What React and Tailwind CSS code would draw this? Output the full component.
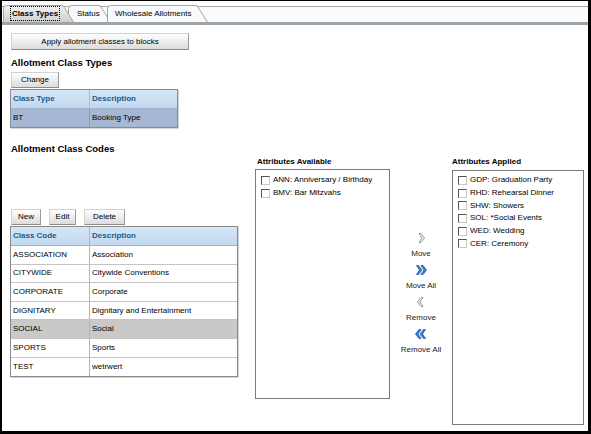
import React from "react";

const CLASS_CODES = [
  { code: "ASSOCIATION", desc: "Association" },
  { code: "CITYWIDE", desc: "Citywide Conventions" },
  { code: "CORPORATE", desc: "Corporate" },
  { code: "DIGNITARY", desc: "Dignitary and Entertainment" },
  { code: "SOCIAL", desc: "Social", selected: true },
  { code: "SPORTS", desc: "Sports" },
  { code: "TEST", desc: "wetrwert" },
];

const AVAILABLE = ["ANN: Anniversary / Birthday", "BMV: Bar Mitzvahs"];

const APPLIED = [
  "GDP: Graduation Party",
  "RHD: Rehearsal Dinner",
  "SHW: Showers",
  "SOL: *Social Events",
  "WED: Wedding",
  "CER: Ceremony",
];

const Tab = ({ w, active, className, children }) => (
  <div className={`relative h-[17px] flex items-center ${className}`}>
    <svg className="absolute inset-0" width={w} height="17">
      <defs>
        <linearGradient id="tabOn" x1="0" y1="0" x2="0" y2="1">
          <stop offset="0" stopColor="#f2f2f2" />
          <stop offset="1" stopColor="#cfcfcf" />
        </linearGradient>
      </defs>
      <path
        d={`M0.5,17 L0.5,3.5 Q0.5,0.5 3.5,0.5 L${w - 11},0.5 L${w - 0.5},17`}
        fill={active ? "url(#tabOn)" : "#f7f9fa"}
        stroke="#a4a4a4"
      />
    </svg>
    <div className="relative">{children}</div>
  </div>
);

const Btn = ({ className, children }) => (
  <div
    className={`h-[16px] flex items-center justify-center border border-[#d2d2d2] border-r-[#9a9a9a] border-b-[#8c8c8c] bg-gradient-to-b from-white to-[#dcdcdc] text-black ${className}`}
  >
    {children}
  </div>
);

const Check = ({ label }) => (
  <div className="h-[12.7px] flex items-center gap-[3px]">
    <span className="w-[9px] h-[9px] border border-[#555] border-r-[#c8c8c8] border-b-[#c8c8c8] bg-white" />
    <span>{label}</span>
  </div>
);

const Chevron = ({ left }) => (
  <svg width="8" height="10" viewBox="0 0 8 10">
    <path
      d={left ? "M6,0.5 L4,0.5 L0.5,5 L4,9.5 L6,9.5 L3,5 Z" : "M2,0.5 L4,0.5 L7.5,5 L4,9.5 L2,9.5 L5,5 Z"}
      fill="#f4f4f4"
      stroke="#8e8e8e"
      strokeWidth="0.9"
    />
  </svg>
);

const DoubleChevron = ({ left }) => (
  <svg width="12" height="10" viewBox="0 0 12 10">
    {(left
      ? ["M6,0.5 L4,0.5 L0.5,5 L4,9.5 L6,9.5 L3,5 Z", "M10.5,0.5 L8.5,0.5 L5,5 L8.5,9.5 L10.5,9.5 L7.5,5 Z"]
      : ["M1.5,0.5 L3.5,0.5 L7,5 L3.5,9.5 L1.5,9.5 L4.5,5 Z", "M6,0.5 L8,0.5 L11.5,5 L8,9.5 L6,9.5 L9,5 Z"]
    ).map((d) => (
      <path key={d} d={d} fill="#3b82d6" stroke="#1d57a8" strokeWidth="0.8" />
    ))}
  </svg>
);

const HeadCell = ({ className, children }) => (
  <div className={`h-full flex items-center pl-[2px] font-bold text-[#22598f] ${className}`}>{children}</div>
);

const App = () => {
  return (
    <div className="w-[591px] h-[434px] bg-white border-t border-l-2 border-r-[3px] border-b-[3px] border-black overflow-hidden font-['Liberation_Sans',Arial,sans-serif] text-[8px] text-black leading-none">
      {/* Tabs */}
      <div className="mt-[5px] h-[19px] border-t border-[#a8a8a8] bg-[#fafcfd] flex items-end pl-[1px] border-b-[3px] border-b-[#9ea3a8]">
        <Tab w={71} active className="w-[71px] z-10 pl-[7px]">
          <span className="font-bold border border-dotted border-black px-[1px] py-[2px]">Class Types</span>
        </Tab>
        <Tab w={43} className="w-[43px] -ml-[6px] pl-[9px]">
          Status
        </Tab>
        <Tab w={101} className="w-[101px] -ml-[4px] pl-[8px]">
          Wholesale Allotments
        </Tab>
      </div>

      <div className="pl-[9px]">
        <Btn className="mt-[8px] w-[178px] h-[17px]">Apply allotment classes to blocks</Btn>

        <div className="mt-[7px] h-[11px] leading-[11px] text-[9.5px] font-bold">Allotment Class Types</div>
        <Btn className="mt-[4px] w-[48px]">Change</Btn>

        {/* Class types table */}
        <div className="mt-[1px] -ml-[1px] w-[168px] border border-[#8a8a8a] shadow-[1px_1px_0_#d6d6d6]">
          <div className="h-[19px] flex bg-gradient-to-b from-[#d6e6f6] to-[#c2d8ef] border-b border-[#9fb4ca]">
            <HeadCell className="w-[79px] border-r border-[#a9bccf]">Class Type</HeadCell>
            <HeadCell>Description</HeadCell>
          </div>
          <div className="h-[18px] flex bg-[#a5b7d5]">
            <div className="w-[79px] pl-[2px] flex items-center border-r border-[#8d9cb6]">BT</div>
            <div className="pl-[2px] flex items-center">Booking Type</div>
          </div>
        </div>

        <div className="mt-[15px] flex">
          {/* Class codes */}
          <div className="w-[227px]">
            <div className="h-[12px] leading-[12px] text-[9.5px] font-bold">Allotment Class Codes</div>
            <div className="mt-[54px] flex gap-[8px]">
              <Btn className="w-[30px]">New</Btn>
              <Btn className="w-[27px]">Edit</Btn>
              <Btn className="w-[41px]">Delete</Btn>
            </div>
            <div className="mt-[1px] -ml-[1px] w-[228px] border border-[#8a8a8a] shadow-[1px_1px_0_#d6d6d6]">
              <div className="h-[19px] flex bg-gradient-to-b from-[#d6e6f6] to-[#c2d8ef] border-b border-[#9fb4ca]">
                <HeadCell className="w-[79px] border-r border-[#a9bccf]">Class Code</HeadCell>
                <HeadCell>Description</HeadCell>
              </div>
              {CLASS_CODES.map((row, i) => (
                <div
                  key={row.code}
                  className={`h-[18.6px] flex ${i < CLASS_CODES.length - 1 ? "border-b border-[#c4c4c4]" : ""} ${row.selected ? "bg-[#c9c9c9]" : "bg-white"}`}
                >
                  <div className="w-[79px] pl-[2px] flex items-center border-r border-[#b4b4b4]">{row.code}</div>
                  <div className="pl-[2px] flex items-center">{row.desc}</div>
                </div>
              ))}
            </div>
          </div>

          {/* Attributes available */}
          <div className="ml-[17px] w-[135px]">
            <div className="mt-[13px] h-[12px] leading-[12px] pl-[2px] font-bold">Attributes Available</div>
            <div className="mt-[1px] h-[230px] border border-[#7c7c7c] pl-[5px] pt-[4px]">
              {AVAILABLE.map((a) => (
                <Check key={a} label={a} />
              ))}
            </div>
          </div>

          {/* Move controls */}
          <div className="w-[62px] pt-[90px] flex flex-col items-center gap-[6px] text-[#222]">
            <div className="h-[10px] flex items-center"><Chevron /></div>
            <div className="h-[10px] flex items-center">Move</div>
            <div className="h-[10px] flex items-center"><DoubleChevron /></div>
            <div className="h-[10px] flex items-center">Move All</div>
            <div className="h-[10px] flex items-center"><Chevron left /></div>
            <div className="h-[10px] flex items-center">Remove</div>
            <div className="h-[10px] flex items-center"><DoubleChevron left /></div>
            <div className="h-[10px] flex items-center">Remove All</div>
          </div>

          {/* Attributes applied */}
          <div className="w-[132px]">
            <div className="mt-[13px] h-[12px] leading-[12px] font-bold">Attributes Applied</div>
            <div className="mt-[2px] h-[255px] border border-[#7c7c7c] pl-[5px] pt-[3px]">
              {APPLIED.map((a) => (
                <Check key={a} label={a} />
              ))}
            </div>
          </div>
        </div>
      </div>
    </div>
  );
};

export default App;
